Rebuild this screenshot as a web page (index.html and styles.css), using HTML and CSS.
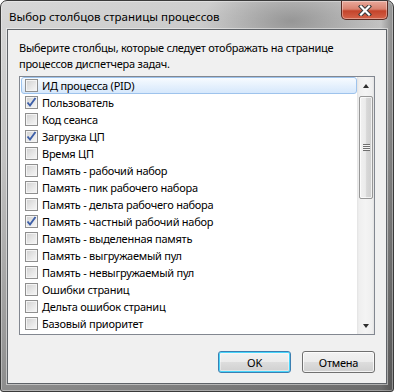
FILE: index.html
```html
<!DOCTYPE html>
<html lang="ru">
<head>
<meta charset="utf-8">
<title>Выбор столбцов страницы процессов</title>
<link rel="stylesheet" href="styles.css">
</head>
<body>
<div class="window">
  <div class="titlebar">
    <span class="title">Выбор столбцов страницы процессов</span>
    <div class="close">
      <svg width="14" height="11" viewBox="0 0 14 11">
        <path d="M3 1.5 L11 9.5 M11 1.5 L3 9.5" stroke="#3a3a3a" stroke-width="4.2" stroke-linecap="square" fill="none"/>
        <path d="M3 1.5 L11 9.5 M11 1.5 L3 9.5" stroke="#ffffff" stroke-width="2.2" stroke-linecap="square" fill="none"/>
      </svg>
    </div>
  </div>
  <div class="client">
    <p class="desc">Выберите столбцы, которые следует отображать на странице<br>процессов диспетчера задач.</p>
    <div class="listbox">
      <ul class="items">
        <li class="item focus"><span class="cb"></span>ИД процесса (PID)</li>
        <li class="item"><span class="cb checked"><svg width="11" height="11" viewBox="0 0 11 11"><path d="M1.5 5.5 L4 8.5 L9.5 1" stroke="#3d5fa8" stroke-width="1.9" fill="none"/></svg></span>Пользователь</li>
        <li class="item"><span class="cb"></span>Код сеанса</li>
        <li class="item"><span class="cb checked"><svg width="11" height="11" viewBox="0 0 11 11"><path d="M1.5 5.5 L4 8.5 L9.5 1" stroke="#3d5fa8" stroke-width="1.9" fill="none"/></svg></span>Загрузка ЦП</li>
        <li class="item"><span class="cb"></span>Время ЦП</li>
        <li class="item"><span class="cb"></span>Память - рабочий набор</li>
        <li class="item"><span class="cb"></span>Память - пик рабочего набора</li>
        <li class="item"><span class="cb"></span>Память - дельта рабочего набора</li>
        <li class="item"><span class="cb checked"><svg width="11" height="11" viewBox="0 0 11 11"><path d="M1.5 5.5 L4 8.5 L9.5 1" stroke="#3d5fa8" stroke-width="1.9" fill="none"/></svg></span>Память - частный рабочий набор</li>
        <li class="item"><span class="cb"></span>Память - выделенная память</li>
        <li class="item"><span class="cb"></span>Память - выгружаемый пул</li>
        <li class="item"><span class="cb"></span>Память - невыгружаемый пул</li>
        <li class="item"><span class="cb"></span>Ошибки страниц</li>
        <li class="item"><span class="cb"></span>Дельта ошибок страниц</li>
        <li class="item"><span class="cb"></span>Базовый приоритет</li>
      </ul>
      <div class="scrollbar">
        <div class="arrow"><span class="tri up"></span></div>
        <div class="track">
          <div class="thumb"><span class="grip"></span></div>
        </div>
        <div class="arrow"><span class="tri down"></span></div>
      </div>
    </div>
    <div class="buttons">
      <button class="btn default">OK</button>
      <button class="btn">Отмена</button>
    </div>
  </div>
</div>
</body>
</html>
```

FILE: styles.css
```css
* { box-sizing: border-box; }
html, body { margin: 0; padding: 0; background: #ffffff; }
body { font-family: "Noto Sans", "Open Sans", sans-serif; font-size: 11px; letter-spacing: -0.25px; color: #000; }

.window {
  position: relative;
  width: 394px;
  height: 392px;
  border: 1px solid #3a3a3a;
  border-radius: 7px 7px 3px 3px;
  padding: 0 6px 7px 6px;
  background:
    radial-gradient(ellipse 90px 40px at 290px 20px, rgba(110,110,110,0.55), rgba(110,110,110,0) 100%),
    linear-gradient(to right, rgba(0,0,0,0) 0, rgba(0,0,0,0) 380px, rgba(40,40,40,0.35) 392px),
    linear-gradient(160deg, #d8d8d8 0%, #c2c2c2 30%, #979797 65%, #6a6a6a 100%);
  box-shadow: inset 0 0 0 1px rgba(255,255,255,0.35);
  display: flex;
  flex-direction: column;
}

.titlebar {
  height: 28px;
  display: flex;
  align-items: center;
  padding: 3px 0 0 2px;
}
.title {
  font-size: 11.5px;
  letter-spacing: 0;
  color: #000;
}

.close {
  position: absolute;
  top: 0;
  right: 5px;
  width: 47px;
  height: 19px;
  border: 1px solid #5a2a22;
  border-top: none;
  border-radius: 0 0 5px 5px;
  background: linear-gradient(to bottom, #e9a99b 0%, #d9826f 45%, #c4442b 55%, #d4634a 100%);
  box-shadow: inset 0 0 0 1px rgba(255,255,255,0.35);
  display: flex;
  align-items: center;
  justify-content: center;
}

.client {
  flex: 1;
  background: #f0f0f0;
  border: 1px solid #5f6368;
  box-shadow: 0 0 0 1px rgba(255,255,255,0.45);
  padding: 10px 11px 10px 11px;
  display: flex;
  flex-direction: column;
}

.desc {
  margin: 0 0 4px 0;
  line-height: 16px;
  white-space: nowrap;
}

.listbox {
  height: 259px;
  flex: none;
  border: 1px solid #828790;
  background: #ffffff;
  display: flex;
}

.items {
  list-style: none;
  margin: 0;
  padding: 0 0 0 1px;
  flex: 1;
}
.item {
  height: 17px;
  border: 1px solid transparent;
  border-radius: 3px;
  padding-left: 3px;
  display: flex;
  align-items: center;
  gap: 4px;
  white-space: nowrap;
}
.item.focus {
  border-color: #9ec3ec;
  background: linear-gradient(to bottom, #f7fbff 0%, #e6f1fd 50%, #d6e8fc 100%);
}

.cb {
  width: 13px;
  height: 13px;
  flex: none;
  border: 1px solid #8f8f8f;
  background: linear-gradient(135deg, #d0d0d0 0%, #e9e9e9 60%, #f7f7f7 100%);
  box-shadow: inset 0 0 0 1px #f4f4f4;
  display: flex;
  align-items: center;
  justify-content: center;
}

.scrollbar {
  width: 17px;
  flex: none;
  display: flex;
  flex-direction: column;
  background: linear-gradient(to right, #e3e3e3 0, #efefef 2px, #f4f4f4 50%, #efefef 15px, #e3e3e3 17px);
}
.arrow {
  height: 17px;
  flex: none;
  display: flex;
  align-items: center;
  justify-content: center;
}
.tri {
  width: 0;
  height: 0;
  border-left: 3.5px solid transparent;
  border-right: 3.5px solid transparent;
}
.tri.up { border-bottom: 4px solid #2e2e2e; }
.tri.down { border-top: 4px solid #2e2e2e; }

.track {
  flex: 1;
  padding: 2px 1px 0 2px;
}
.thumb {
  height: 103px;
  border: 1px solid #979797;
  border-radius: 2px;
  background: linear-gradient(to right, #f1f1f1 0%, #ebebeb 45%, #d8d8d8 55%, #cfcfcf 100%);
  box-shadow: inset 0 0 0 1px rgba(255,255,255,0.7);
  display: flex;
  align-items: center;
  justify-content: center;
}
.grip {
  width: 7px;
  height: 7px;
  background: repeating-linear-gradient(to bottom, #6f6f6f 0, #6f6f6f 1px, #f5f5f5 1px, #f5f5f5 2px);
}

.buttons {
  margin-top: 16px;
  display: flex;
  justify-content: flex-end;
  gap: 11px;
}
.btn {
  width: 73px;
  height: 22px;
  font-family: "Noto Sans", "Open Sans", sans-serif;
  font-size: 11px;
  letter-spacing: -0.25px;
  color: #000;
  border: 1px solid #707070;
  border-radius: 3px;
  padding: 0;
  background: linear-gradient(to bottom, #f2f2f2 0%, #ebebeb 50%, #dddddd 51%, #cfcfcf 100%);
  box-shadow: inset 0 0 0 1px rgba(255,255,255,0.75);
}
.btn.default {
  border-color: #3c7fb1;
  box-shadow: inset 0 0 0 1px #48d5fb, inset 0 0 0 2px rgba(255,255,255,0.4);
}
```
